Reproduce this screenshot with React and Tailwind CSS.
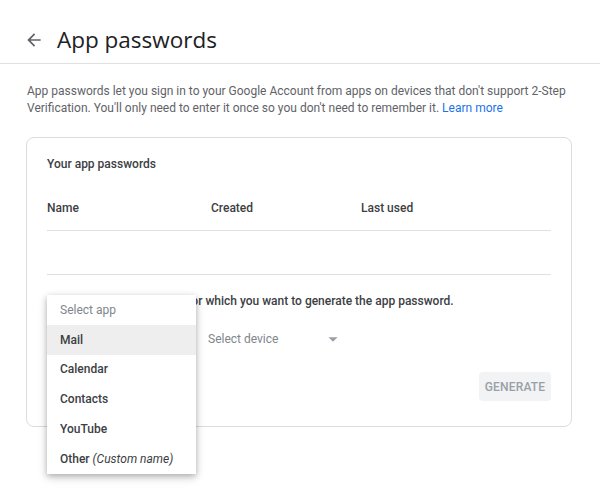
import React from 'react';

const font = { fontFamily: 'Roboto, "Liberation Sans", Arial, sans-serif' };

const apps = ['Mail', 'Calendar', 'Contacts', 'YouTube'];

const AppMenu = () => (
  <div className="absolute left-0 top-[-29px] z-10 w-[149px] bg-white shadow-[0_2px_6px_rgba(0,0,0,0.25),0_4px_10px_rgba(0,0,0,0.12)]">
    <div className="h-[29.8px] flex items-center pl-[13px] text-[12px] text-[#80868b]">Select app</div>
    {apps.map((app, i) => (
      <div
        key={app}
        className={`h-[29.8px] flex items-center pl-[13px] text-[12px] font-medium text-[#3c4043] ${i === 0 ? 'bg-[#eeeeee]' : ''}`}
      >
        {app}
      </div>
    ))}
    <div className="h-[29.8px] flex items-center pl-[13px] text-[12px] font-medium text-[#3c4043]">
      Other&nbsp;<span className="italic font-normal">(Custom name)</span>
    </div>
  </div>
);

const App = () => {
  return (
    <div className="w-[600px] h-[503px] bg-white overflow-hidden" style={font}>
      <div className="h-[64px] border-b border-[#e0e0e0] flex items-center pt-[17px] pl-[24px]">
        <svg width="20" height="20" viewBox="0 0 24 24" className="text-[#5f6368]">
          <path fill="currentColor" d="M20 11H7.83l5.59-5.59L12 4l-8 8 8 8 1.41-1.41L7.83 13H20v-2z" />
        </svg>
        <h1 className="ml-[13px] text-[22.5px] leading-[30px] text-[#202124]" style={{ fontFamily: '"Open Sans", Roboto, sans-serif' }}>
          App passwords
        </h1>
      </div>

      <p className="mt-[19px] px-[27px] text-[12px] leading-[17px] text-[#5f6368]">
        App passwords let you sign in to your Google Account from apps on devices that don't support 2-Step
        Verification. You'll only need to enter it once so you don't need to remember it.{' '}
        <span className="text-[#1a73e8]">Learn more</span>
      </p>

      <div className="mt-[20px] ml-[26px] w-[546px] h-[290px] border border-[#dadce0] rounded-[8px] px-[20px] pt-[18px]">
        <div className="text-[12px] leading-[17px] font-medium text-[#3c4043]">Your app passwords</div>

        <div className="mt-[27px] pb-[13px] border-b border-[#e0e0e0] flex text-[12px] leading-[17px] font-medium text-[#3c4043]">
          <div className="w-[164px]">Name</div>
          <div className="w-[150px]">Created</div>
          <div>Last used</div>
        </div>
        <div className="h-[44px] border-b border-[#e0e0e0]" />

        <div className="mt-[18px] text-[12px] leading-[17px] font-medium text-[#3c4043]">
          Select the app and device for which you want to generate the app password.
        </div>

        <div className="mt-[14px] flex gap-[20px]">
          <div className="relative w-[141px] h-[30px] flex items-center">
            <span className="text-[12px] text-[#5f6368]">Select app</span>
            <AppMenu />
          </div>
          <div className="relative w-[141px] h-[30px] flex items-center justify-between">
            <span className="text-[12px] text-[#80868b]">Select device</span>
            <svg width="22" height="22" viewBox="0 0 24 24" className="text-[#9aa0a6] mr-[5px]">
              <path fill="currentColor" d="M7 10l5 5 5-5z" />
            </svg>
          </div>
        </div>

        <div className="mt-[18px] flex justify-end">
          <button className="w-[72px] h-[29px] rounded-[4px] bg-[#f1f3f4] text-[12px] font-medium text-[#9aa0a6] tracking-[0.2px]">
            GENERATE
          </button>
        </div>
      </div>
    </div>
  );
};

export default App;
